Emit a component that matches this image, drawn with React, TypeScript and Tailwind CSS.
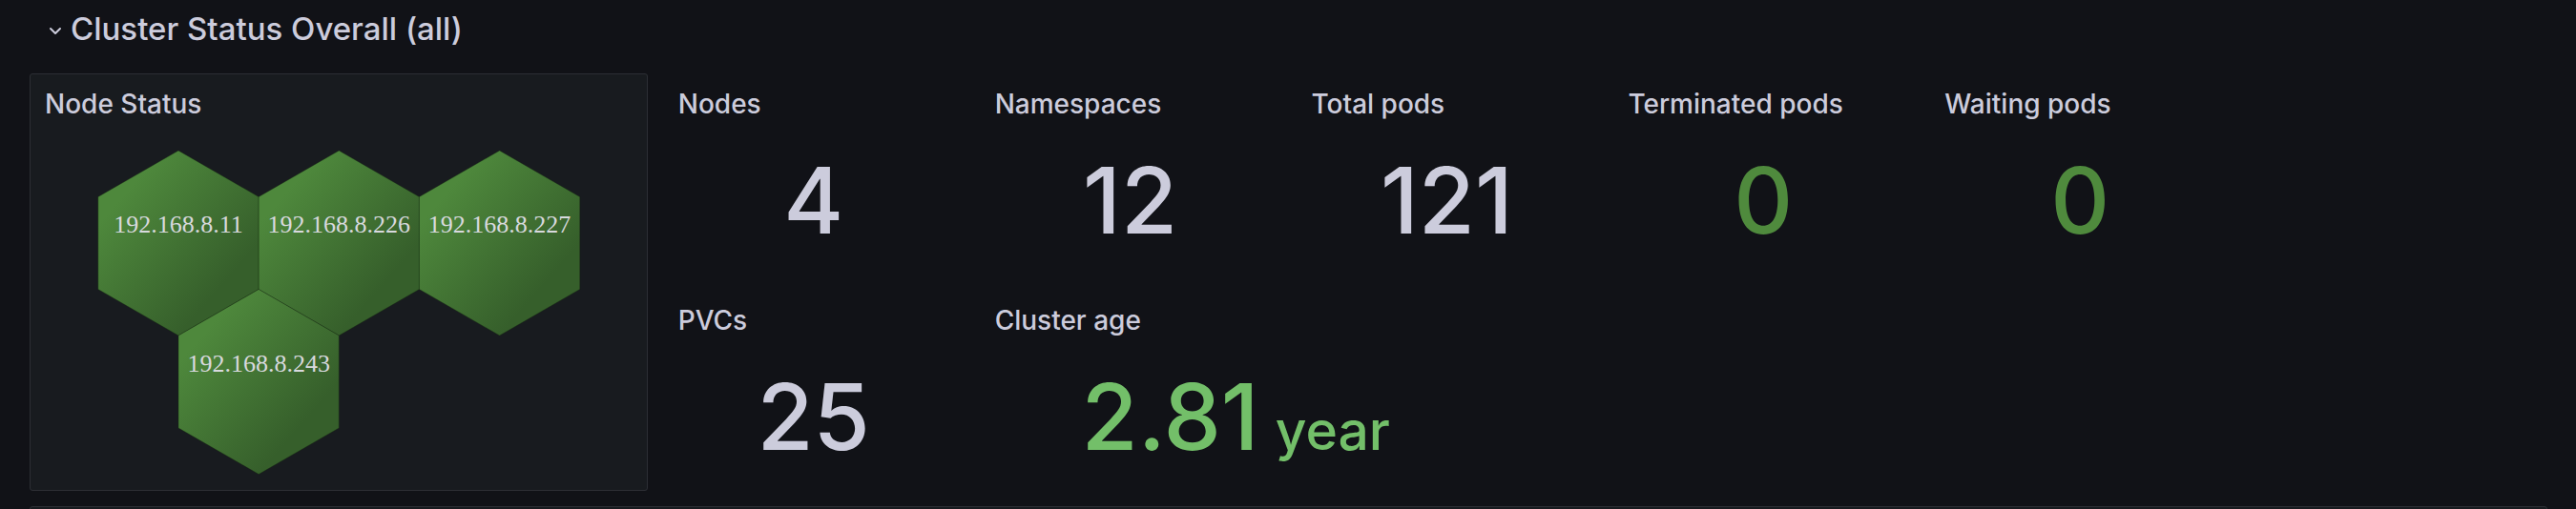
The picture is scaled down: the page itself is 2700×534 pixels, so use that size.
import React from "react";

type Hex = { cx: number; cy: number; label: string };

const R = 97;
const W = 84.15;

const hexes: Hex[] = [
  { cx: 154, cy: 122, label: "192.168.8.11" },
  { cx: 322.3, cy: 122, label: "192.168.8.226" },
  { cx: 490.6, cy: 122, label: "192.168.8.227" },
  { cx: 238.15, cy: 267.5, label: "192.168.8.243" },
];

function hexPoints(cx: number, cy: number) {
  const pts = [
    [cx, cy - R],
    [cx + W, cy - R / 2],
    [cx + W, cy + R / 2],
    [cx, cy + R],
    [cx - W, cy + R / 2],
    [cx - W, cy - R / 2],
  ];
  return pts.map((p) => p.join(",")).join(" ");
}

function HexMap() {
  return (
    <svg width={644} height={381} viewBox="0 0 644 381">
      <defs>
        <linearGradient id="hexg" x1="0" y1="0" x2="1" y2="1">
          <stop offset="0.2" stopColor="#4e883c" />
          <stop offset="0.75" stopColor="#365f2b" />
        </linearGradient>
      </defs>
      {hexes.map((h) => (
        <polygon
          key={h.label}
          points={hexPoints(h.cx, h.cy)}
          fill="url(#hexg)"
          stroke="rgba(20,40,15,0.35)"
          strokeWidth={1}
        />
      ))}
      {hexes.map((h) => (
        <text
          key={h.label + "t"}
          x={h.cx}
          y={h.cy - 11}
          textAnchor="middle"
          fill="#d8d9de"
          fontSize={26}
          className="font-['Liberation_Serif',serif]"
        >
          {h.label}
        </text>
      ))}
    </svg>
  );
}

function Stat({
  label,
  value,
  unit,
  color,
  span,
}: {
  label: string;
  value: string;
  unit?: string;
  color: string;
  span: string;
}) {
  return (
    <div className={`${span} flex flex-col border border-transparent`}>
      <div className="h-[55px] shrink-0 px-[15px] pt-[11px]">
        <div className="text-[28px] leading-[40px] font-medium text-[#ccccdc] whitespace-nowrap">
          {label}
        </div>
      </div>
      <div className="flex-1 flex items-center justify-center">
        <div className={`flex items-baseline font-medium ${color}`}>
          <span className="text-[96px] leading-[96px]">{value}</span>
          {unit && (
            <span className="text-[57px] leading-[60px] ml-[17px]">{unit}</span>
          )}
        </div>
      </div>
    </div>
  );
}

export default function App() {
  return (
    <div className="w-[2700px] h-[534px] overflow-hidden bg-[#111217] font-[Inter,sans-serif] pl-[31px] pr-[30px]">
      <div className="h-[77px] pt-[10px]">
        <div className="flex items-center">
          <svg
            width="14"
            height="9"
            viewBox="0 0 14 9"
            className="ml-[20px] mr-[9px] mt-[4px]"
          >
            <path
              d="M2 2 L7 7 L12 2"
              fill="none"
              stroke="#ccccdc"
              strokeWidth="2"
              strokeLinecap="round"
              strokeLinejoin="round"
            />
          </svg>
          <span className="text-[33px] leading-[40px] font-medium text-[#ccccdc] whitespace-nowrap">
            Cluster Status Overall (all)
          </span>
        </div>
      </div>
      <div className="grid grid-cols-[repeat(24,minmax(0,1fr))] grid-rows-[211px_211px] gap-4">
        <div className="col-span-6 row-span-2 flex flex-col bg-[#181b1f] border border-[#2c2e34] rounded-[3px]">
          <div className="h-[55px] shrink-0 px-[15px] pt-[11px]">
            <div className="text-[28px] leading-[40px] font-medium text-[#ccccdc]">
              Node Status
            </div>
          </div>
          <div className="flex-1 flex justify-center items-start">
            <HexMap />
          </div>
        </div>
        <Stat span="col-span-3" label="Nodes" value="4" color="text-[#ccccdc]" />
        <Stat span="col-span-3" label="Namespaces" value="12" color="text-[#ccccdc]" />
        <Stat span="col-span-3" label="Total pods" value="121" color="text-[#ccccdc]" />
        <Stat span="col-span-3" label="Terminated pods" value="0" color="text-[#4f8a3d]" />
        <Stat span="col-span-3" label="Waiting pods" value="0" color="text-[#4f8a3d]" />
        <div className="col-span-3" />
        <Stat span="col-span-3" label="PVCs" value="25" color="text-[#ccccdc]" />
        <Stat span="col-span-5" label="Cluster age" value="2.81" unit="year" color="text-[#73bf69]" />
      </div>
      <div className="mt-4 h-[40px] bg-[#181b1f] border border-[#2c2e34] rounded-[3px]" />
    </div>
  );
}
